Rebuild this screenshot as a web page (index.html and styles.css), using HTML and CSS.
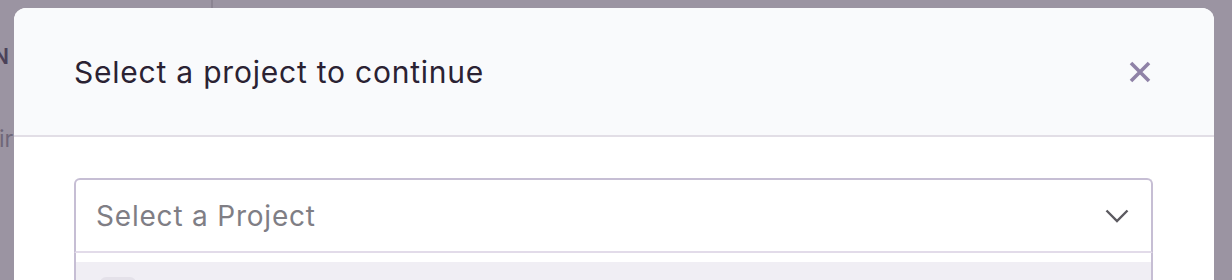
FILE: index.html
```html
<!DOCTYPE html>
<html>
<head>
<meta charset="utf-8">
<link rel="stylesheet" href="styles.css">
</head>
<body>
<div class="backdrop">
  <div class="bg-app">
    <div class="bg-sidebar">
      <span class="bg-n">N</span>
      <span class="bg-ir">ir</span>
    </div>
  </div>
  <div class="modal">
    <div class="modal-header">
      <h4 class="modal-title">Select a project to continue</h4>
      <button class="close" aria-label="Close">
        <svg width="22" height="22" viewBox="0 0 22 22"><path d="M2 2 L20 20 M20 2 L2 20" stroke="#8f82a7" stroke-width="3.6" stroke-linecap="butt" fill="none"/></svg>
      </button>
    </div>
    <div class="modal-body">
      <div class="select">
        <div class="control">
          <span class="placeholder">Select a Project</span>
          <svg class="chev" width="24" height="14" viewBox="0 0 24 14"><path d="M1.5 1.5 L12 12 L22.5 1.5" stroke="#5c5a60" stroke-width="2.4" fill="none"/></svg>
        </div>
        <div class="menu">
          <div class="option"><span class="avatar"></span></div>
        </div>
      </div>
    </div>
  </div>
</div>
</body>
</html>
```
FILE: styles.css
```css
html, body {
  margin: 0;
  padding: 0;
  width: 1232px;
  height: 280px;
  overflow: hidden;
  font-family: Inter, "Noto Sans", sans-serif;
}
.backdrop {
  position: relative;
  width: 1232px;
  height: 280px;
  background: #9b94a2;
  overflow: hidden;
}
.bg-app {
  position: absolute;
  left: 0;
  top: 0;
  width: 211px;
  height: 280px;
  border-right: 2px solid #8b8492;
}
.bg-n {
  position: absolute;
  left: -7px;
  top: 44px;
  font-size: 21px;
  font-weight: 600;
  color: #4b4259;
}
.bg-ir {
  position: absolute;
  left: -1px;
  top: 125px;
  font-size: 23px;
  color: #6f6779;
}
.modal {
  position: absolute;
  left: 14px;
  top: 8px;
  width: 1200px;
  height: 300px;
  background: #fff;
  border-radius: 12px 12px 0 0;
  overflow: hidden;
}
.modal-header {
  height: 127px;
  background: #f9fafc;
  border-bottom: 2px solid #e2dee6;
  display: flex;
  align-items: center;
  justify-content: space-between;
  padding: 0 60px;
}
.modal-title {
  margin: 0;
  font-size: 30px;
  font-weight: 400;
  color: #2b2233;
  letter-spacing: 0.78px;
}
.close {
  background: none;
  border: 0;
  padding: 0;
  margin-right: 3px;
  display: flex;
}
.modal-body {
  padding: 41px 60px 0;
}
.select {
  width: 1079px;
}
.control {
  height: 71px;
  border: 2px solid #c6bed4;
  border-bottom-color: #e2dbe9;
  border-radius: 6px 6px 0 0;
  display: flex;
  align-items: center;
  justify-content: space-between;
  padding: 0 22px 0 20px;
  background: #fff;
}
.placeholder {
  font-size: 28px;
  letter-spacing: 0.8px;
  color: #7f7e85;
}
.menu {
  border-left: 2px solid #c6bed4;
  border-right: 2px solid #c6bed4;
  padding-top: 9px;
  background: #fff;
}
.option {
  background: #f0eef4;
  height: 60px;
  padding: 15px 24px;
}
.avatar {
  display: block;
  width: 36px;
  height: 36px;
  border-radius: 6px;
  background: #e4e1e9;
}
```
